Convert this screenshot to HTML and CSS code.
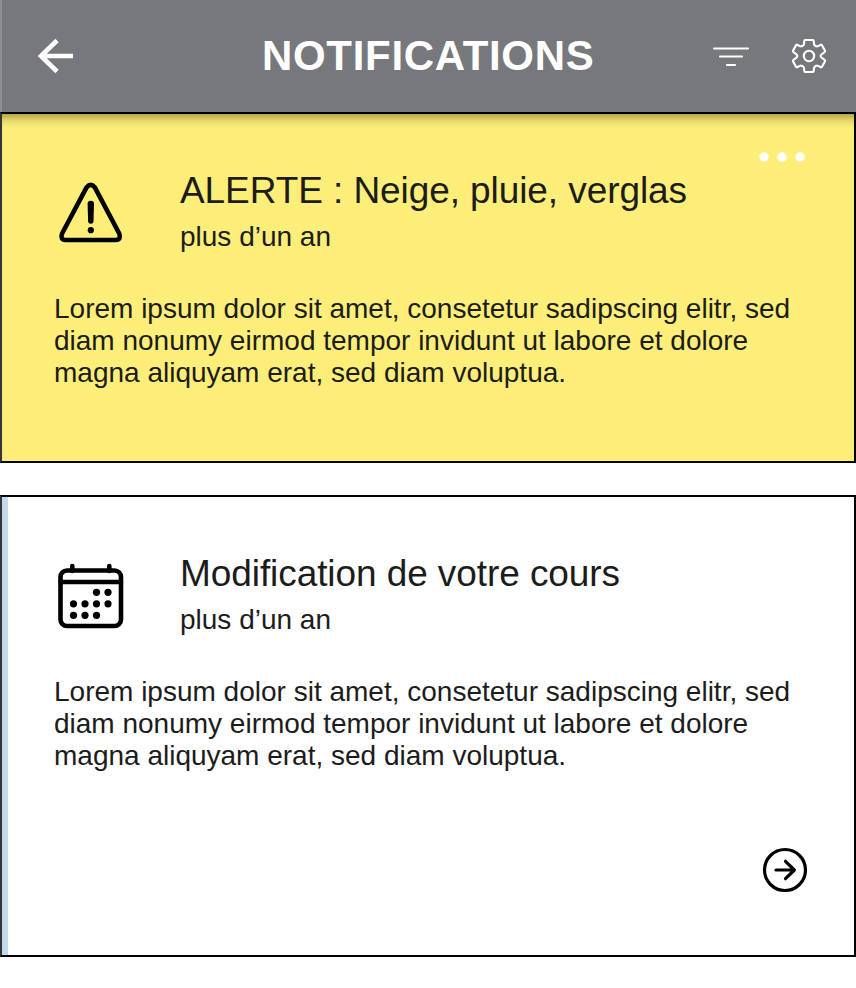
FILE: index.html
```html
<!DOCTYPE html>
<html lang="fr">
<head>
<meta charset="utf-8">
<title>Notifications</title>
<link rel="stylesheet" href="styles.css">
</head>
<body>
<header class="topbar">
  <svg class="back" width="40" height="40" viewBox="35 36 40 40"><path d="M57 40.500 41 56l16 15.500M41 56h32"/></svg>
  <h1>NOTIFICATIONS</h1>
  <svg class="filter" width="38" height="24" viewBox="712 43 38 24"><path d="M714 47.500h34M720 55.500h22M727 64h8"/></svg>
  <svg class="gear" width="38" height="38" viewBox="-19 -19 38 38"><path d="M-3.800-16H3.800Q4.600-16 4.700-15.200L5-12Q5.200-10.900 6.200-10.300L7.200-9.800Q8.100-9.300 9.200-9.900L11.800-11.200Q12.600-11.500 13-10.800L16-5.200Q16.300-4.500 15.700-4L13.200-2.100Q11.600-.8 11.600 0T13.200 2.100L15.700 4Q16.300 4.500 16 5.200L13 10.800Q12.600 11.500 11.800 11.200L9.200 9.900Q8.100 9.300 7.200 9.800L6.200 10.300Q5.200 10.900 5 12L4.700 15.200Q4.600 16 3.800 16H-3.800Q-4.600 16-4.700 15.200L-5 12Q-5.200 10.900-6.200 10.300L-7.200 9.800Q-8.100 9.300-9.200 9.900L-11.800 11.200Q-12.600 11.500-13 10.800L-16 5.200Q-16.300 4.500-15.700 4L-13.200 2.100Q-11.600.8-11.600 0T-13.200-2.100L-15.700-4Q-16.300-4.500-16-5.200L-13-10.800Q-12.600-11.500-11.800-11.200L-9.200-9.900Q-8.100-9.300-7.200-9.800L-6.200-10.300Q-5.200-10.900-5-12L-4.700-15.200Q-4.600-16-3.800-16z"/><circle cx="0" cy="0" r="5.200"/></svg>
</header>
<main>
  <article class="card alert">
    <svg class="more" width="48" height="12" viewBox="758 151 48 12"><circle cx="764" cy="157" r="4.700"/><circle cx="782" cy="157" r="4.700"/><circle cx="800" cy="157" r="4.700"/></svg>
    <div class="head">
      <svg class="icon" width="70" height="70" viewBox="56 178 70 70"><path d="M86.700 187.200Q90.700 182.600 94.700 187.200L119.200 233.500Q121.500 239.800 115.800 240H65.500Q59.800 239.800 62.100 233.500z"/><path class="mark" d="M87.600 203.800q0-3 3.200-3t3.200 3l-.5 17.700q-.2 2.300-2.700 2.300t-2.700-2.300z"/><circle class="dot" cx="90.800" cy="230.200" r="3.100"/></svg>
      <div class="titles"><h2>ALERTE : Neige, pluie, verglas</h2><p>plus d’un an</p></div>
    </div>
    <p class="text">Lorem ipsum dolor sit amet, consetetur sadipscing elitr, sed diam nonumy eirmod tempor invidunt ut labore et dolore magna aliquyam erat, sed diam voluptua.</p>
  </article>
  <article class="card course">
    <div class="head">
      <svg class="icon" width="70" height="70" viewBox="56 561 70 70"><rect x="60.500" y="570.500" width="60.500" height="55.500" rx="6.500"/><path d="M60.500 582H121M72.300 566v5M109.300 566v5"/><g class="dot"><circle cx="96.500" cy="592.300" r="3.600"/><circle cx="108" cy="592.300" r="3.600"/><circle cx="73.500" cy="603.800" r="3.600"/><circle cx="85" cy="603.800" r="3.600"/><circle cx="96.500" cy="603.800" r="3.600"/><circle cx="108" cy="603.800" r="3.600"/><circle cx="73.500" cy="615.300" r="3.600"/><circle cx="85" cy="615.300" r="3.600"/><circle cx="96.500" cy="615.300" r="3.600"/></g></svg>
      <div class="titles"><h2>Modification de votre cours</h2><p>plus d’un an</p></div>
    </div>
    <p class="text">Lorem ipsum dolor sit amet, consetetur sadipscing elitr, sed diam nonumy eirmod tempor invidunt ut labore et dolore magna aliquyam erat, sed diam voluptua.</p>
    <svg class="go" width="46" height="46" viewBox="762 847 46 46"><circle cx="785" cy="870" r="20.500"/><path d="M776 870h18M785.500 861.300l8.900 8.700-8.900 8.700"/></svg>
  </article>
</main>
</body>
</html>
```
FILE: styles.css
```css
* { box-sizing: border-box; }
body { margin: 0; background: #fff; color: #1c1c1c; font-family: "Liberation Sans", Arial, sans-serif; }
h1, h2, p { margin: 0; font-weight: normal; }
svg { display: block; fill: none; stroke-linecap: round; stroke-linejoin: round; }

.topbar { display: flex; align-items: center; height: 112px; padding: 0 28px 0 33px; background: #77787b; border-left: 2px solid #8d8e91; }
.topbar svg { stroke: #fff; }
.topbar h1 { width: 340px; margin-left: 187px; color: #fff; font-size: 42px; font-weight: bold; line-height: 48px; letter-spacing: .68px; white-space: nowrap; }
.back { stroke-width: 4.6; stroke-linecap: butt; stroke-linejoin: miter; }
.filter { margin-left: auto; stroke-width: 2.2; }
.gear { margin-left: 40px; stroke-width: 2.1; }

.card { display: flex; flex-direction: column; border: 2px solid #000; border-left-color: #35343a; padding: 0 52px; }
.alert { position: relative; height: 351px; background: #fcee79; box-shadow: inset 0 12px 12px -10px rgba(60, 50, 0, .6); }
.course { height: 462px; margin-top: 32px; background: linear-gradient(90deg, #c0dcea 6px, #fff 6px); }
.more { position: absolute; top: 37px; right: 48px; }
.more circle { fill: #fff; }
.head { display: flex; padding: 54px 0 0 2px; }
.icon { margin-top: 10px; stroke: #000; stroke-width: 4.6; }
.icon .dot, .icon .mark { fill: #000; stroke: none; }
.titles { margin-left: 54px; white-space: nowrap; }
.titles h2 { padding-top: 1px; font-size: 37px; line-height: 44px; letter-spacing: -.08px; font-variant-ligatures: common-ligatures; }
.titles p { margin-top: 8px; font-size: 28px; line-height: 32px; }
.text { width: 760px; margin-top: 40px; font-size: 28px; line-height: 32px; }
.go { margin: auto -6px 62px auto; stroke: #000; stroke-width: 3.2; }
```
